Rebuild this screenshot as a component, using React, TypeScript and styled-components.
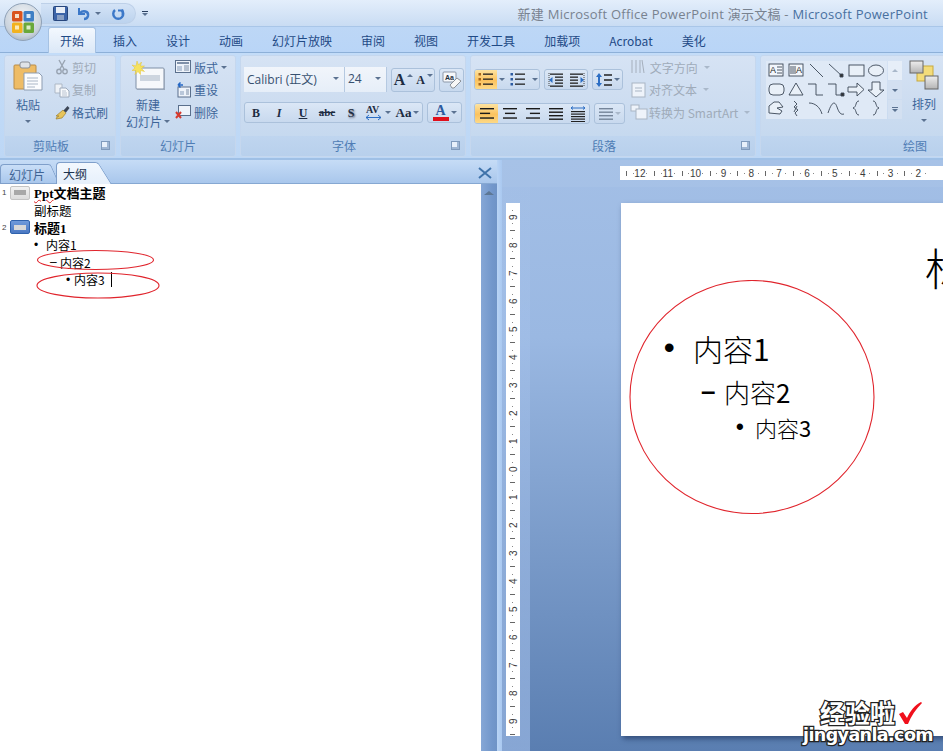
import React from 'react'
import styled, { createGlobalStyle } from 'styled-components'

const CJK = `"Noto Sans CJK SC", sans-serif`
const UI = `"Open Sans", "Noto Sans CJK SC", sans-serif`
const SERIF = `"Liberation Serif", "Noto Sans CJK SC", serif`

const Global = createGlobalStyle`
  html, body { margin: 0; padding: 0; background: #fff; overflow: hidden; }
  * { box-sizing: border-box; }
`

const Shell = styled.div`
  position: relative;
  width: 943px;
  height: 751px;
  overflow: hidden;
  display: flex;
  flex-direction: column;
  font-family: ${CJK};
  font-size: 12px;
`

/* title bar */
const TitleBar = styled.div`
  height: 26px;
  flex: none;
  display: flex;
  align-items: center;
  padding: 1px 15px 0 41px;
  background: linear-gradient(#e3eefb, #d6e5f7 50%, #c9dcf3);
`
const Quick = styled.div`
  height: 21px;
  width: 95px;
  display: flex;
  align-items: center;
  padding-left: 12px;
  border-radius: 0 11px 11px 0;
  background: linear-gradient(#d4e3f6, #bcd3ee);
  border: 1px solid #bdd0e8;
  border-left: none;
`
const QuickBtn = styled.div<{ $gap?: number }>`
  display: flex;
  align-items: center;
  margin-right: ${(p) => p.$gap ?? 0}px;
`
const QuickMore = styled.div`
  margin-left: 6px;
  display: flex;
  flex-direction: column;
  align-items: center;
  gap: 1px;
  &::before { content: ''; width: 6px; height: 1px; background: #2a3f5f; }
`
const Title = styled.div`
  margin-left: auto;
  font-family: ${UI};
  font-size: 13px;
  color: #78828f;
  white-space: nowrap;
  letter-spacing: 0.25px;
  span { color: #48709f; }
`
const Orb = styled.div`
  position: absolute;
  left: 4px;
  top: 3px;
  width: 38px;
  height: 38px;
  border-radius: 50%;
  background: radial-gradient(circle at 50% 35%, #f4f6f8, #c9d2dc 65%, #8f9dac);
  border: 1px solid #8fa1b6;
  display: flex;
  align-items: center;
  justify-content: center;
`

/* tab row */
const TabRow = styled.div`
  height: 27px;
  flex: none;
  display: flex;
  align-items: flex-end;
  padding-left: 45.5px;
  background: linear-gradient(#bdd7f6, #b9d5f7);
  border-top: 1px solid #a9c6e8;
  border-bottom: 1px solid #8db0d8;
`
const RibbonTab = styled.div<{ $active?: boolean }>`
  height: ${(p) => (p.$active ? 26 : 24)}px;
  margin: 0 2.5px ${(p) => (p.$active ? -1 : 0)}px;
  padding: 0 12px;
  display: flex;
  align-items: center;
  color: #1f4a86;
  font-size: 12px;
  white-space: nowrap;
  border-radius: 3px 3px 0 0;
  ${(p) =>
    p.$active &&
    `background: linear-gradient(#f3f8fe, #dbe8f7);
     border: 1px solid #a6c2e3;
     border-bottom: none;
     padding: 0 11px;`}
`

/* ribbon */
const Ribbon = styled.div`
  height: 107px;
  flex: none;
  display: flex;
  gap: 4px;
  padding: 2px 0 0 4px;
  overflow: hidden;
  background: linear-gradient(#c3dcf8, #bdd7f5);
  border-bottom: 2px solid #9fc0e6;
`
const Group = styled.section<{ $w: number }>`
  flex: none;
  width: ${(p) => p.$w}px;
  height: 102px;
  display: flex;
  flex-direction: column;
  border: 1px solid #c5d7ee;
  border-radius: 3px;
  overflow: hidden;
`
const GroupBody = styled.div<{ $pl?: number; $pt?: number }>`
  height: 80px;
  flex: none;
  display: flex;
  padding: ${(p) => p.$pt ?? 0}px 0 0 ${(p) => p.$pl ?? 0}px;
  background: linear-gradient(#d6e3f4, #cfdef1 45%, #c6d9ef);
`
const GroupLabel = styled.div<{ $launcher?: boolean }>`
  position: relative;
  flex: 1;
  display: flex;
  align-items: center;
  justify-content: center;
  padding-bottom: 1px;
  padding-right: ${(p) => (p.$launcher ? 18 : 0)}px;
  color: #4f7db5;
  font-size: 12px;
  background: linear-gradient(#bfd5ef, #b8d0ec);
  ${(p) =>
    p.$launcher &&
    `&::after {
      content: '';
      position: absolute;
      right: 5px;
      top: 5px;
      width: 7px;
      height: 7px;
      background: #e8f0fa;
      border: 1px solid #7f9abc;
      box-shadow: inset -2px -2px 0 #9fb6d3;
    }`}
`
const LargeBtn = styled.div<{ $w: number; $ml?: number; $mt?: number }>`
  flex: none;
  width: ${(p) => p.$w}px;
  margin: ${(p) => p.$mt ?? 0}px 0 0 ${(p) => p.$ml ?? 0}px;
  padding-top: 4px;
  display: flex;
  flex-direction: column;
  align-items: center;
  color: #3d6599;
  line-height: 17px;
  white-space: nowrap;
  svg { margin-bottom: 5px; }
`
const LabelRow = styled.div`
  display: flex;
  align-items: center;
  gap: 2px;
`
const Caret = styled.i<{ $off?: boolean; $mt?: number; $up?: boolean; $raise?: boolean; $ml?: number }>`
  display: inline-block;
  flex: none;
  width: 0;
  height: 0;
  margin-top: ${(p) => p.$mt ?? 0}px;
  margin-left: ${(p) => p.$ml ?? 0}px;
  margin-bottom: ${(p) => (p.$raise ? 8 : 0)}px;
  transform: ${(p) => (p.$up ? 'rotate(180deg)' : 'none')};
  border-left: 3px solid transparent;
  border-right: 3px solid transparent;
  border-top: 3px solid ${(p) => (p.$off ? '#a9b8ca' : '#5b7291')};
`
const SmallCol = styled.div<{ $ml: number; $mt?: number }>`
  display: flex;
  flex-direction: column;
  margin: ${(p) => p.$mt ?? 0}px 0 0 ${(p) => p.$ml}px;
`
const SmallBtn = styled.div<{ $off?: boolean; $gap?: number }>`
  height: 22.5px;
  display: flex;
  align-items: center;
  gap: ${(p) => p.$gap ?? 2}px;
  padding-left: 2px;
  color: ${(p) => (p.$off ? '#9fabb9' : '#3d6599')};
  white-space: nowrap;
`
const Stack = styled.div<{ $gap: number; $ml?: number }>`
  display: flex;
  flex-direction: column;
  gap: ${(p) => p.$gap}px;
  margin-left: ${(p) => p.$ml ?? 0}px;
`
const Row = styled.div<{ $gap?: number }>`
  display: flex;
  align-items: center;
  gap: ${(p) => p.$gap ?? 4}px;
`
const Combo = styled.div<{ $w: number }>`
  width: ${(p) => p.$w}px;
  height: 25px;
  padding: 0 5px 2px 3px;
  display: flex;
  align-items: center;
  justify-content: space-between;
  background: linear-gradient(#f1f5fb, #e6eef8);
  border-right: 1px solid #b5c9e1;
  color: #37506f;
  font-family: ${UI};
  font-size: 12px;
  white-space: nowrap;
`
const Chip = styled.div<{ $h?: number }>`
  height: ${(p) => p.$h ?? 22}px;
  display: flex;
  align-items: stretch;
  border: 1px solid #abc1db;
  border-radius: 3px;
  overflow: hidden;
  background: linear-gradient(#dbe7f6, #c8d9ee);
`
const Tool = styled.div<{ $w: number; $on?: boolean }>`
  width: ${(p) => p.$w}px;
  flex: none;
  display: flex;
  align-items: center;
  justify-content: center;
  gap: 2px;
  color: #1d2c42;
  ${(p) => p.$on && `background: linear-gradient(#fde3a0, #fbc25e 55%, #fdd986);`}
`
const Glyph = styled.span<{ $size?: number; $italic?: boolean; $under?: boolean; $strike?: boolean; $shadow?: boolean }>`
  font-family: ${SERIF};
  font-weight: bold;
  font-size: ${(p) => p.$size ?? 12}px;
  font-style: ${(p) => (p.$italic ? 'italic' : 'normal')};
  text-decoration: ${(p) => (p.$under ? 'underline' : p.$strike ? 'line-through' : 'none')};
  text-shadow: ${(p) => (p.$shadow ? '1px 1px 2px #556' : 'none')};
  line-height: 1;
`
const ColorA = styled.span`
  display: flex;
  flex-direction: column;
  align-items: center;
  font-family: ${SERIF};
  font-weight: bold;
  font-size: 14px;
  line-height: 13px;
  color: #2c5aa0;
  &::after { content: ''; width: 16px; height: 4px; background: #e0101c; }
`
const Gallery = styled.div`
  width: 121px;
  height: 58px;
  display: grid;
  grid-template-columns: repeat(6, 20px);
  grid-auto-rows: 19px;
  background: #dfe9f6;
`
const GalleryScroll = styled.div`
  width: 14px;
  height: 58px;
  margin-left: 1px;
  display: flex;
  flex-direction: column;
  gap: 1px;
`
const ScrollCell = styled.div<{ $light?: boolean; $more?: boolean }>`
  flex: 1;
  display: flex;
  flex-direction: column;
  gap: 1px;
  align-items: center;
  justify-content: center;
  background: ${(p) => (p.$light ? '#e6eef8' : '#d3e0f1')};
  ${(p) => p.$more && `&::before { content: ''; width: 6px; height: 1px; background: #5b7291; }`}
`

/* work area */
const Work = styled.div`
  flex: 1;
  min-height: 0;
  display: flex;
`
const Panel = styled.div`
  width: 497px;
  flex: none;
  display: flex;
  flex-direction: column;
`
const PanelHead = styled.div`
  height: 24px;
  flex: none;
  display: flex;
  align-items: flex-end;
  padding-left: 0;
  background: linear-gradient(#c6dcf6, #a9c7ec);
  border-bottom: 1px solid #86a8d2;
`
const PaneTab = styled.div<{ $active?: boolean }>`
  position: relative;
  height: ${(p) => (p.$active ? 22 : 20)}px;
  margin-bottom: -1px;
  padding: ${(p) => (p.$active ? '0 8px 0 6px' : '0 0 0 8px')};
  margin-left: ${(p) => (p.$active ? 11 : 0)}px;
  display: flex;
  align-items: center;
  font-size: 12px;
  color: ${(p) => (p.$active ? '#1c3350' : '#3e6394')};
  background: ${(p) => (p.$active ? 'linear-gradient(#f3f8fe, #e6f0fb)' : 'linear-gradient(#c9def7, #a9c7ec)')};
  border: 1px solid #7f9fca;
  border-width: 1px 0 ${(p) => (p.$active ? 0 : 1)}px 1px;
  border-radius: 4px 0 0 0;
  z-index: ${(p) => (p.$active ? 2 : 1)};
  &::after {
    content: '';
    position: absolute;
    top: -1px;
    bottom: 0;
    right: -10px;
    width: 20px;
    background: inherit;
    border: 1px solid #7f9fca;
    border-width: 1px 1px 0 0;
    border-radius: 0 3px 0 0;
    transform: skewX(${(p) => (p.$active ? 32 : 24)}deg);
    z-index: -1;
  }
`
const PaneClose = styled.div`
  margin: 0 5px 4px auto;
  display: flex;
`
const PanelBody = styled.div`
  flex: 1;
  min-height: 0;
  display: flex;
`
const Outline = styled.div`
  position: relative;
  flex: 1;
  background: #fff;
  color: #000;
`
const SlideRow = styled.div`
  height: 17.4px;
  display: flex;
  align-items: center;
  font-family: ${SERIF};
  font-size: 13px;
  font-weight: bold;
`
const SlideNum = styled.span`
  width: 10px;
  padding-left: 2px;
  font: 8px "Liberation Sans", sans-serif;
  color: #444;
`
const SlideThumb = styled.span<{ $current?: boolean }>`
  width: 20px;
  height: 14px;
  margin-right: 4px;
  border-radius: 2px;
  border: 1px solid ${(p) => (p.$current ? '#2f62ad' : '#c4c4c4')};
  background: ${(p) => (p.$current ? 'linear-gradient(#6f9adb, #4a78c2)' : 'linear-gradient(#f2f2f2, #dcdcdc)')};
  display: flex;
  align-items: center;
  justify-content: center;
  &::after {
    content: '';
    width: 12px;
    height: 5px;
    background: ${(p) => (p.$current ? '#d8d8d8' : '#a8a8a8')};
  }
`
const Squiggle = styled.span`
  text-decoration: underline wavy #d22;
  text-decoration-thickness: 1px;
`
const SubLine = styled.div`
  height: 17.4px;
  display: flex;
  align-items: center;
  padding-left: 34px;
  font-size: 12.5px;
`
const Item = styled.div<{ $indent: number; $mark: number }>`
  height: 17.4px;
  display: flex;
  align-items: center;
  padding-left: ${(p) => p.$indent}px;
  font-size: 12px;
  & > b {
    width: ${(p) => p.$mark}px;
    flex: none;
    font-weight: normal;
    font-family: "Liberation Sans", sans-serif;
  }
`
const TextCaret = styled.i`
  width: 1px;
  height: 15px;
  margin-left: 6px;
  background: #000;
`
const Overlay = styled.svg`
  position: absolute;
  left: 0;
  top: 0;
  pointer-events: none;
`
const VScroll = styled.div`
  width: 16px;
  flex: none;
  display: flex;
  justify-content: center;
  padding-top: 7px;
  background: linear-gradient(90deg, #86a7d6, #7297cb 70%, #6f93c6);
`
const ScrollUp = styled.i`
  width: 0;
  height: 0;
  border-left: 5px solid transparent;
  border-right: 5px solid transparent;
  border-bottom: 4px solid #5d7795;
`
const Splitter = styled.div`
  width: 5px;
  flex: none;
  background: linear-gradient(90deg, #b9d4f5, #a9c8f0);
`

const Editor = styled.div`
  flex: 1;
  min-width: 0;
  display: grid;
  grid-template-columns: 28px 1fr;
  grid-template-rows: 27px 1fr;
  background: linear-gradient(#a3bfe6, #9ab8e2 30%, #5a7eb1);
  overflow: hidden;
`
const Corner = styled.div`
  background: rgba(255, 255, 255, 0.05);
`
const TopStrip = styled.div`
  padding: 6px 0 0 90px;
  overflow: hidden;
  background: rgba(255, 255, 255, 0.05);
`
const Ruler = styled.div`
  height: 14px;
  display: flex;
  padding-left: 6px;
  background: #fff;
`
const RulerCell = styled.span`
  flex: none;
  width: 27.85px;
  display: flex;
  align-items: center;
  justify-content: center;
  font: 10px "Liberation Sans", sans-serif;
  color: #3c3c3c;
  background:
    linear-gradient(#666, #666) 0 50% / 1px 5px no-repeat,
    linear-gradient(#888, #888) 25% 50% / 1px 1px no-repeat,
    linear-gradient(#888, #888) 75% 50% / 1px 1px no-repeat;
`
const SideStrip = styled.div`
  padding: 16px 0 0 4px;
  background: linear-gradient(rgba(190, 215, 255, 0.04), rgba(190, 215, 255, 0.45));
  overflow: hidden;
`
const SideRuler = styled.div`
  width: 14px;
  height: 533px;
  display: flex;
  flex-direction: column;
  background: #fff;
`
const SideCell = styled.span`
  flex: none;
  height: 28px;
  display: flex;
  align-items: center;
  justify-content: center;
  writing-mode: vertical-rl;
  transform: rotate(180deg);
  font: 10px "Liberation Sans", sans-serif;
  color: #3c3c3c;
  background:
    linear-gradient(#666, #666) 50% 0 / 5px 1px no-repeat,
    linear-gradient(#888, #888) 50% 25% / 1px 1px no-repeat,
    linear-gradient(#888, #888) 50% 75% / 1px 1px no-repeat;
`
const Canvas = styled.div`
  padding: 16px 0 0 91px;
  overflow: hidden;
`
const Slide = styled.div`
  position: relative;
  width: 720px;
  height: 533px;
  background: #fff;
  box-shadow: 2px 3px 5px rgba(20, 40, 80, 0.55);
`
const SlideTitle = styled.div`
  padding: 42px 0 0 304px;
  height: 87px;
  font-size: 44px;
  font-weight: 300;
  line-height: 44px;
  white-space: nowrap;
  color: #000;
`
const SlideBody = styled.div`
  padding-top: 38px;
  display: flex;
  flex-direction: column;
`
const Bullet = styled.div<{ $size: number; $indent: number; $mark: number; $lh: number; $mb: number }>`
  display: flex;
  align-items: center;
  height: ${(p) => p.$lh}px;
  margin-bottom: ${(p) => p.$mb}px;
  padding-left: ${(p) => p.$indent}px;
  font-size: ${(p) => p.$size}px;
  font-weight: 300;
  color: #000;
  & > b {
    width: ${(p) => p.$mark}px;
    flex: none;
    font-family: "Liberation Sans", sans-serif;
    font-weight: bold;
  }
  & > span { font-weight: 400; }
`
const Annotation = styled.svg`
  position: absolute;
  left: 8px;
  top: 77px;
  pointer-events: none;
`
const Watermark = styled.div`
  position: absolute;
  left: 803px;
  top: 699px;
  display: flex;
  flex-direction: column;
  font-weight: bold;
  color: #fff;
  -webkit-text-stroke: 2.5px #222;
  paint-order: stroke fill;
`
const MarkTop = styled.div`
  display: flex;
  align-items: center;
  gap: 3px;
  height: 27px;
  font-size: 25px;
  padding-left: 17px;
  line-height: 27px;
  font-family: ${CJK};
`
const MarkBottom = styled.div`
  font: bold 17.5px/19px "DejaVu Sans", sans-serif;
  letter-spacing: -0.6px;
`

/* icons */
const PasteIcon = () => (
  <svg width="30" height="31" viewBox="0 0 30 31">
    <rect x="1" y="5" width="22" height="24" rx="1" fill="#eebc66" stroke="#b98c48" />
    <rect x="7" y="2" width="10" height="6" rx="2" fill="#dfe3e8" stroke="#8a8f96" />
    <path d="M11 13h15l3 3v14H11z" fill="#fbfcfe" stroke="#8d9db2" />
    <path d="M14 18h11M14 21h11M14 24h11M14 27h8" stroke="#aab6c6" />
  </svg>
)
const CutIcon = () => (
  <svg width="16" height="16" viewBox="0 0 16 16" fill="none" stroke="#99a4b2" strokeWidth="1.4">
    <path d="M5 1l5 9M11 1L6 10" />
    <circle cx="5" cy="12.5" r="2.2" />
    <circle cx="11" cy="12.5" r="2.2" />
  </svg>
)
const CopyIcon = () => (
  <svg width="16" height="16" viewBox="0 0 16 16">
    <path d="M1 2h7v9H1z" fill="#eef2f7" stroke="#adb8c6" />
    <path d="M6 6h6l3 3v6H6z" fill="#f7f9fc" stroke="#9eabbc" />
    <path d="M8 9h4M8 11h5M8 13h5" stroke="#b9c3d0" />
  </svg>
)
const BrushIcon = () => (
  <svg width="16" height="16" viewBox="0 0 16 16">
    <path d="M9 6l3 3-4 5-6 1 1-2 2-1-3 0z" fill="#e7c45a" stroke="#9d7f2d" strokeWidth="0.7" />
    <path d="M9.5 6.5l4-4.5 2 2-3.5 4.500z" fill="#3c4656" />
  </svg>
)
const NewSlideIcon = () => (
  <svg width="36" height="31" viewBox="0 0 36 31">
    <rect x="6" y="8" width="28" height="21" rx="1" fill="#f6f8fb" stroke="#7f8fa6" />
    <rect x="10" y="15" width="20" height="6" fill="#cdd5df" />
    <path d="M34 29H7v1h28V9h-1z" fill="#9aa8ba" />
    <path d="M7 1l1.500 4 3-3-1 4 4 0-3 2.500 3 3-4-1 0 4-2.500-3-3 3 1-4-4 0 3-2.500-3-3 4 1z" fill="#f6e25e" stroke="#e2c23a" strokeWidth="0.5" />
  </svg>
)
const LayoutIcon = () => (
  <svg width="16" height="14" viewBox="0 0 16 14" fill="none">
    <rect x="0.500" y="0.500" width="15" height="12" fill="#eef3fa" stroke="#5a6f8c" />
    <path d="M2 3h12" stroke="#5a6f8c" strokeWidth="1.500" />
    <path d="M2 6h5v5H2z" fill="#b9c7da" />
    <path d="M9 6h5M9 8h5M9 10h5" stroke="#7d8ea6" />
  </svg>
)
const ResetIcon = () => (
  <svg width="16" height="16" viewBox="0 0 16 16" fill="none">
    <rect x="3" y="5" width="12.500" height="10" fill="#eef3fa" stroke="#5a6f8c" />
    <path d="M5 9h4v4H5z" fill="#b9c7da" />
    <path d="M11 8h3M11 10h3M11 12h3" stroke="#7d8ea6" />
    <path d="M8 3H3M3 3l2.500-2.500M3 3l2.500 2.500" stroke="#2467c4" strokeWidth="1.500" />
  </svg>
)
const DeleteIcon = () => (
  <svg width="16" height="14" viewBox="0 0 16 14" fill="none">
    <rect x="3.500" y="0.500" width="12" height="10" fill="#eef3fa" stroke="#5a6f8c" />
    <path d="M1 7l5 6M6 7l-5 6" stroke="#d63a2e" strokeWidth="2" />
  </svg>
)
const EraserIcon = () => (
  <svg width="20" height="18" viewBox="0 0 20 18">
    <rect x="1" y="1" width="13" height="10" rx="1" fill="#f6f8fb" stroke="#8b97a8" />
    <text x="3" y="9" fontSize="7" fontFamily="Liberation Sans" fontWeight="bold" fill="#24303f">Aa</text>
    <path d="M8 14l7-7 4 3-7 7h-2z" fill="#f7f7f7" stroke="#8a8f96" />
  </svg>
)
const Lines = ({ w = 14, n = 3, color = '#1a1a1a', short = false, center = false, right = false }: { w?: number; n?: number; color?: string; short?: boolean; center?: boolean; right?: boolean }) => {
  const step = 14 / n
  return (
    <svg width={w} height="14" viewBox={`0 0 ${w} 14`}>
      {Array.from({ length: n }).map((_, i) => {
        const l = short && i % 2 ? w * 0.72 : w
        const x = center ? (w - l) / 2 : right ? w - l : 0
        return <rect key={i} x={x} y={i * step + 1} width={l} height="1.400" fill={color} />
      })}
    </svg>
  )
}
const BulletIcon = ({ numbered }: { numbered?: boolean }) => (
  <svg width="16" height="15" viewBox="0 0 16 15">
    {[2, 7, 12].map((y) => (
      <g key={y}>
        <rect x="0.500" y={y - 1} width="2.500" height="2.500" fill={numbered ? '#2c5aa0' : '#a5641a'} />
        <rect x="5" y={y - 0.500} width="10" height="1.300" fill="#222" />
      </g>
    ))}
  </svg>
)
const IndentIcon = ({ flip }: { flip?: boolean }) => (
  <svg width="16" height="14" viewBox="0 0 16 14" style={flip ? { transform: 'scaleX(-1)' } : undefined}>
    {[1, 4, 7, 10, 13].map((y, i) => (
      <rect key={y} x={i % 4 === 0 ? 2 : 7} y={y - 0.500} width={i % 4 === 0 ? 13 : 8} height="1.300" fill="#222" />
    ))}
    <path d="M1 7l3.500-3v6z" fill="#2c6ec4" />
    <path d="M1 0v14" stroke="#444" strokeDasharray="1 1" />
  </svg>
)
const SpacingIcon = () => (
  <svg width="16" height="16" viewBox="0 0 16 16">
    <path d="M3 1l3 4H4v6h2l-3 4-3-4h2V5H0z" fill="#2c6ec4" />
    <path d="M8 3h8M8 8h8M8 13h8" stroke="#222" strokeWidth="1.300" />
  </svg>
)
const JustifyWide = () => (
  <svg width="16" height="16" viewBox="0 0 16 16">
    <path d="M1 2h14M1 2l2-1.500M1 2l2 1.500M15 2l-2-1.500M15 2l-2 1.500" stroke="#2c6ec4" fill="none" />
    {[5, 7.500, 10, 12.500, 15].map((y) => <rect key={y} x="1" y={y} width="14" height="1.200" fill="#222" />)}
  </svg>
)
const TextDirIcon = () => (
  <svg width="16" height="16" viewBox="0 0 16 16" stroke="#a5afbc" fill="none">
    <path d="M2 1v13M6 1v13M10 1v13M14 14L12 1" />
  </svg>
)
const AlignTextIcon = () => (
  <svg width="18" height="16" viewBox="0 0 18 16" fill="#eef3fa" stroke="#a9b5c4">
    <rect x="2" y="1" width="13" height="14" />
    <path d="M5 6h7M5 9h7" />
  </svg>
)
const SmartArtIcon = () => (
  <svg width="18" height="16" viewBox="0 0 18 16" fill="#eef3fa" stroke="#a9b5c4">
    <rect x="1" y="1" width="8" height="6" />
    <rect x="6" y="5" width="11" height="10" />
  </svg>
)
const ArrangeIcon = () => (
  <svg width="31" height="30" viewBox="0 0 31 30">
    <rect x="8" y="6" width="16" height="15" fill="#f3dc7a" stroke="#c8a93e" />
    <rect x="1" y="1" width="13" height="12" fill="url(#arrGray)" stroke="#666" />
    <rect x="16" y="16" width="13" height="13" fill="url(#arrGray)" stroke="#666" />
    <defs>
      <linearGradient id="arrGray" x1="0" y1="0" x2="0" y2="1">
        <stop offset="0" stopColor="#eeeeee" />
        <stop offset="1" stopColor="#b4b4b4" />
      </linearGradient>
    </defs>
  </svg>
)
const shapePaths: React.ReactNode[] = [
  <><rect x="3" y="3" width="14" height="12" fill="#f2f6fb" /><text x="4" y="12" fontSize="9" fontFamily="Liberation Sans" fill="#222" stroke="none">A</text><path d="M11 6h5M11 9h5M11 12h5" /></>,
  <><rect x="3" y="3" width="14" height="12" fill="#f2f6fb" /><path d="M5 5v8M7 5v8M9 5v8" /><text x="10" y="12" fontSize="9" fontFamily="Liberation Sans" fill="#222" stroke="none">A</text></>,
  <path d="M4 3l13 13" />,
  <><path d="M3 3l13 12" /><path d="M14 13h3v3h-3z" fill="#333" /></>,
  <rect x="3" y="4" width="15" height="11" fill="#e9f0f8" />,
  <ellipse cx="10" cy="9.500" rx="7.500" ry="5.500" fill="#e9f0f8" />,
  <rect x="3" y="4" width="15" height="11" rx="4" fill="#e9f0f8" />,
  <path d="M10 3l7 12H3z" fill="#e9f0f8" />,
  <path d="M2 4h8v11h7" />,
  <><path d="M2 4h8v11h6" /><path d="M15 13h3v3h-3z" fill="#333" /></>,
  <path d="M2 7h9V3l7 6.500-7 6.500v-4H2z" fill="#e9f0f8" />,
  <path d="M6 2h8v8h4l-8 7-8-7h4z" fill="#e9f0f8" />,
  <path d="M3 14V7l5-4h5l4 5-6 1 5 3-2 3z" fill="#e9f0f8" />,
  <path d="M8 2l3 3-3 3 4 3-3 3 2 3M11 7l-3 6" />,
  <path d="M3 4c6 0 11 4 13 11" />,
  <path d="M2 14C6 2 9 2 11 8s4 8 7 7" />,
  <path d="M13 2c-4 0-2 6-6 7 4 1 2 7 6 7" />,
  <path d="M7 2c4 0 2 6 6 7-4 1-2 7-6 7" />,
]

const rulerTop = [12, 11, 10, 9, 8, 7, 6, 5, 4, 3, 2]
const rulerSide = [9, 8, 7, 6, 5, 4, 3, 2, 1, 0, 1, 2, 3, 4, 5, 6, 7, 8, 9]
const ribbonTabs = ['开始', '插入', '设计', '动画', '幻灯片放映', '审阅', '视图', '开发工具', '加载项', 'Acrobat', '美化']

const App = () => (
  <Shell>
    <Global />
    <TitleBar>
      <Quick>
        <QuickBtn $gap={9}>
          <svg width="15" height="15" viewBox="0 0 15 15">
            <rect x="0.500" y="0.500" width="14" height="14" rx="1" fill="#3c64a8" stroke="#28467c" />
            <rect x="3" y="1" width="9" height="6" fill="#e8eef7" />
            <rect x="4" y="9" width="7" height="5" fill="#8aa0c4" />
          </svg>
        </QuickBtn>
        <QuickBtn $gap={4}>
          <svg width="14" height="14" viewBox="0 0 14 14" fill="none" stroke="#3c78c8" strokeWidth="2.400">
            <path d="M3 6c3-3 9-2 8 3-0.500 2-2 3-4 3" />
            <path d="M2 1v6h6" strokeWidth="2" />
          </svg>
        </QuickBtn>
        <QuickBtn $gap={10}>
          <Caret />
        </QuickBtn>
        <QuickBtn>
          <svg width="14" height="14" viewBox="0 0 14 14" fill="none" stroke="#3c78c8" strokeWidth="2.400">
            <path d="M4 3a5 5 0 1 0 6.500 0" />
            <path d="M7 3.500h4.500V8" strokeWidth="1.800" />
          </svg>
        </QuickBtn>
      </Quick>
      <QuickMore>
        <Caret />
      </QuickMore>
      <Title>
        新建 Microsoft Office PowerPoint 演示文稿 - <span>Microsoft PowerPoint</span>
      </Title>
    </TitleBar>
    <Orb>
      <svg width="24" height="24" viewBox="0 0 24 24">
        <rect x="1" y="1" width="10.500" height="10.500" rx="1.500" fill="#d9541e" />
        <rect x="12.500" y="1" width="10.500" height="10.500" rx="1.500" fill="#3f7fc4" />
        <rect x="1" y="12.500" width="10.500" height="10.500" rx="1.500" fill="#f2b21e" />
        <rect x="12.500" y="12.500" width="10.500" height="10.500" rx="1.500" fill="#6aa83a" />
        <rect x="4" y="4" width="4" height="4" fill="#f6e0c8" />
        <rect x="15.500" y="4" width="4" height="4" fill="#d9e8f6" />
        <rect x="4" y="15.500" width="4" height="4" fill="#fbeab8" />
        <rect x="15.500" y="15.500" width="4" height="4" fill="#dcedc8" />
      </svg>
    </Orb>

    <TabRow>
      {ribbonTabs.map((t, i) => (
        <RibbonTab key={t} $active={i === 0}>{t}</RibbonTab>
      ))}
    </TabRow>

    <Ribbon>
      <Group $w={112}>
        <GroupBody $pl={7}>
          <LargeBtn $w={32}>
            <PasteIcon />
            粘贴
            <Caret $mt={7} />
          </LargeBtn>
          <SmallCol $ml={8}>
            <SmallBtn $off><CutIcon />剪切</SmallBtn>
            <SmallBtn $off><CopyIcon />复制</SmallBtn>
            <SmallBtn><BrushIcon />格式刷</SmallBtn>
          </SmallCol>
        </GroupBody>
        <GroupLabel $launcher>剪贴板</GroupLabel>
      </Group>

      <Group $w={116}>
        <GroupBody $pl={4}>
          <LargeBtn $w={46}>
            <NewSlideIcon />
            新建
            <LabelRow>幻灯片<Caret /></LabelRow>
          </LargeBtn>
          <SmallCol $ml={2}>
            <SmallBtn $gap={3}><LayoutIcon />版式<Caret /></SmallBtn>
            <SmallBtn $gap={3}><ResetIcon />重设</SmallBtn>
            <SmallBtn $gap={3}><DeleteIcon />删除</SmallBtn>
          </SmallCol>
        </GroupBody>
        <GroupLabel>幻灯片</GroupLabel>
      </Group>

      <Group $w={226}>
        <GroupBody $pl={3} $pt={11}>
          <Stack $gap={10}>
            <Row>
              <Row $gap={0}>
                <Combo $w={101}>Calibri (正文)<Caret /></Combo>
                <Combo $w={42}>24<Caret /></Combo>
              </Row>
              <Chip $h={24}>
                <Tool $w={23}><Glyph $size={16}>A</Glyph><Caret $up $raise /></Tool>
                <Tool $w={19}><Glyph $size={12}>A</Glyph><Caret $raise /></Tool>
              </Chip>
              <Chip $h={24}>
                <Tool $w={23}><EraserIcon /></Tool>
              </Chip>
            </Row>
            <Row>
              <Chip $h={21}>
                <Tool $w={22}><Glyph>B</Glyph></Tool>
                <Tool $w={24}><Glyph $italic>I</Glyph></Tool>
                <Tool $w={24}><Glyph $under>U</Glyph></Tool>
                <Tool $w={24}><Glyph $strike $size={11}>abc</Glyph></Tool>
                <Tool $w={24}><Glyph $shadow>S</Glyph></Tool>
                <Tool $w={30}>
                  <svg width="18" height="16" viewBox="0 0 18 16">
                    <text x="1" y="8" fontSize="10" fontWeight="bold" fontFamily="Liberation Serif" fill="#1d2c42">AV</text>
                    <path d="M1 12.500h15M1 12.500l3-2.500M1 12.500l3 2.500M16 12.500l-3-2.500M16 12.500l-3 2.500" stroke="#2c6ec4" fill="none" />
                  </svg>
                  <Caret />
                </Tool>
                <Tool $w={29}><Glyph $size={13}>Aa</Glyph><Caret /></Tool>
              </Chip>
              <Chip $h={21}>
                <Tool $w={33}><ColorA>A</ColorA><Caret /></Tool>
              </Chip>
            </Row>
          </Stack>
        </GroupBody>
        <GroupLabel $launcher>字体</GroupLabel>
      </Group>

      <Group $w={286}>
        <GroupBody $pl={3} $pt={13}>
          <Stack $gap={13}>
            <Row>
              <Chip $h={21}>
                <Tool $w={22} $on><BulletIcon /></Tool>
                <Tool $w={9}><Caret /></Tool>
                <Tool $w={24}><BulletIcon numbered /></Tool>
                <Tool $w={9}><Caret /></Tool>
              </Chip>
              <Chip $h={21}>
                <Tool $w={21}><IndentIcon /></Tool>
                <Tool $w={21}><IndentIcon flip /></Tool>
              </Chip>
              <Chip $h={21}>
                <Tool $w={29}><SpacingIcon /><Caret /></Tool>
              </Chip>
            </Row>
            <Row>
              <Chip $h={21}>
                <Tool $w={23} $on><Lines short /></Tool>
                <Tool $w={23}><Lines short center /></Tool>
                <Tool $w={23}><Lines short right /></Tool>
                <Tool $w={23}><Lines n={4} /></Tool>
                <Tool $w={22}><JustifyWide /></Tool>
              </Chip>
              <Chip $h={21}>
                <Tool $w={29}><Lines n={4} color="#75859a" /><Caret $off /></Tool>
              </Chip>
            </Row>
          </Stack>
          <SmallCol $ml={3} $mt={-13}>
            <SmallBtn $off $gap={1}><TextDirIcon />&nbsp;文字方向<Caret $off $ml={5} /></SmallBtn>
            <SmallBtn $off $gap={1}><AlignTextIcon />对齐文本<Caret $off $ml={5} /></SmallBtn>
            <SmallBtn $off $gap={1}><SmartArtIcon />转换为 SmartArt<Caret $off $ml={5} /></SmallBtn>
          </SmallCol>
        </GroupBody>
        <GroupLabel $launcher>段落</GroupLabel>
      </Group>

      <Group $w={310}>
        <GroupBody $pl={5} $pt={5}>
          <Gallery>
            {shapePaths.map((s, i) => (
              <svg key={i} width="20" height="19" viewBox="0 0 20 19" fill="none" stroke="#3a4656" strokeWidth="0.900">
                {s}
              </svg>
            ))}
          </Gallery>
          <GalleryScroll>
            <ScrollCell $light><Caret $off $up /></ScrollCell>
            <ScrollCell><Caret /></ScrollCell>
            <ScrollCell $more><Caret /></ScrollCell>
          </GalleryScroll>
          <LargeBtn $w={36} $ml={4} $mt={-5}>
            <ArrangeIcon />
            排列
            <Caret $mt={7} />
          </LargeBtn>
        </GroupBody>
        <GroupLabel>绘图</GroupLabel>
      </Group>
    </Ribbon>

    <Work>
      <Panel>
        <PanelHead>
          <PaneTab>幻灯片</PaneTab>
          <PaneTab $active>大纲</PaneTab>
          <PaneClose>
            <svg width="14" height="12" viewBox="0 0 14 12" stroke="#3f73aa" strokeWidth="2">
              <path d="M1 1l12 10M13 1L1 11" />
            </svg>
          </PaneClose>
        </PanelHead>
        <PanelBody>
          <Outline>
            <SlideRow>
              <SlideNum>1</SlideNum>
              <SlideThumb />
              <span><Squiggle>Ppt</Squiggle>文档主题</span>
            </SlideRow>
            <SubLine>副标题</SubLine>
            <SlideRow>
              <SlideNum>2</SlideNum>
              <SlideThumb $current />
              标题1
            </SlideRow>
            <Item $indent={34} $mark={12}><b>•</b>内容1</Item>
            <Item $indent={50} $mark={10}><b>–</b>内容2</Item>
            <Item $indent={66} $mark={8}><b>•</b>内容3<TextCaret /></Item>
            <Overlay width="170" height="120" fill="none" stroke="#e0242c" strokeWidth="1.100">
              <ellipse cx="95.500" cy="76" rx="58" ry="9.500" />
              <ellipse cx="98" cy="101.500" rx="61" ry="12.500" />
            </Overlay>
          </Outline>
          <VScroll>
            <ScrollUp />
          </VScroll>
        </PanelBody>
      </Panel>
      <Splitter />
      <Editor>
        <Corner />
        <TopStrip>
          <Ruler>
            {rulerTop.map((n, i) => <RulerCell key={i}>{n}</RulerCell>)}
          </Ruler>
        </TopStrip>
        <SideStrip>
          <SideRuler>
            {rulerSide.map((n, i) => <SideCell key={i}>{n}</SideCell>)}
          </SideRuler>
        </SideStrip>
        <Canvas>
          <Slide>
            <SlideTitle>标题1</SlideTitle>
            <SlideBody>
              <Bullet $size={30} $indent={43} $mark={29} $lh={40} $mb={4}><b>•</b>内容<span>1</span></Bullet>
              <Bullet $size={26} $indent={80} $mark={23} $lh={38} $mb={2}><b>–</b>内容<span>2</span></Bullet>
              <Bullet $size={22} $indent={115} $mark={19} $lh={30} $mb={0}><b>•</b>内容<span>3</span></Bullet>
            </SlideBody>
            <Annotation width="247" height="235" fill="none" stroke="#e0242c" strokeWidth="1.100">
              <ellipse cx="123" cy="117" rx="122" ry="116.500" />
            </Annotation>
          </Slide>
        </Canvas>
      </Editor>
    </Work>

    <Watermark>
      <MarkTop>
        经验啦
        <svg width="24" height="24" viewBox="0 0 24 24">
          <path d="M1 13l4-2 4 6C12 10 17 4 23 1l1 1C18 8 13 15 10 23H7z" fill="#f0101c" stroke="none" />
        </svg>
      </MarkTop>
      <MarkBottom>jingyanla.com</MarkBottom>
    </Watermark>
  </Shell>
)

export default App
